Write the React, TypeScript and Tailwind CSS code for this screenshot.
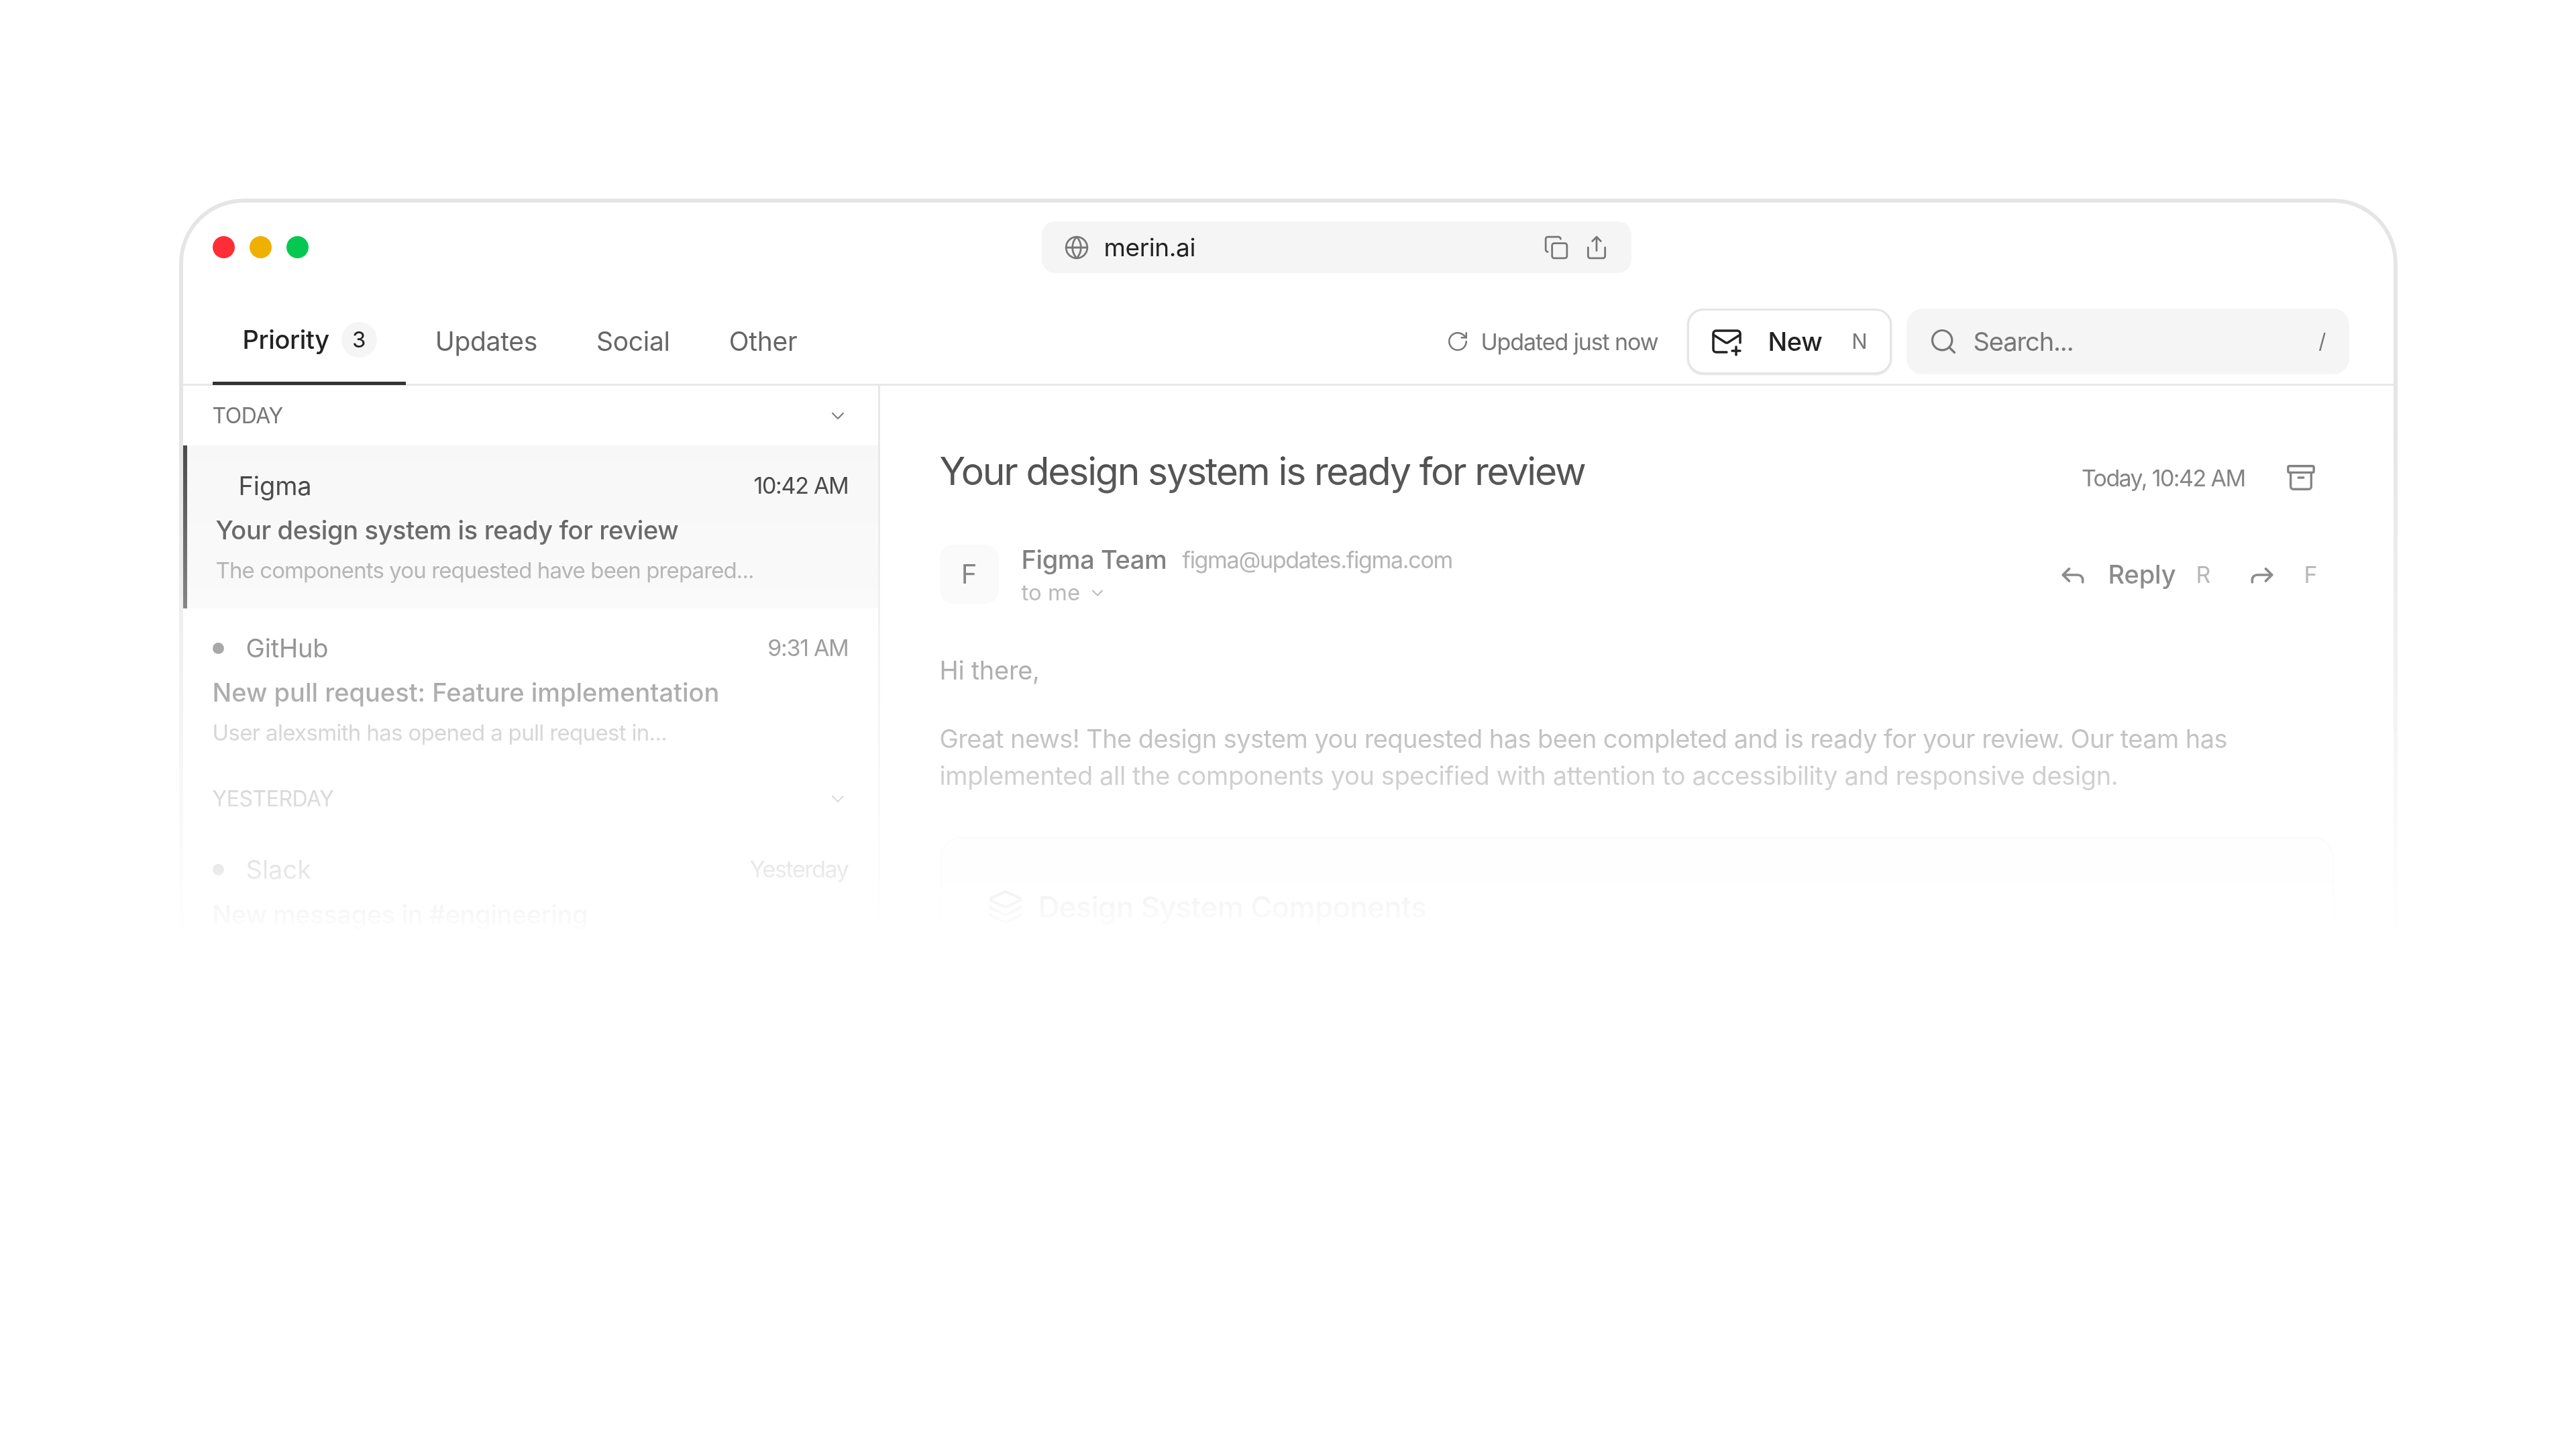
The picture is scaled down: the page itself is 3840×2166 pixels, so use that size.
import { Globe, Copy, Share, RotateCw, MailPlus, Search, ChevronDown, Archive, Reply, Forward, Layers } from "lucide-react";

function SectionHeader({ label }: { label: string }) {
  return (
    <div className="flex h-[89px] items-center justify-between pl-[44px] pr-[44px]">
      <span className="text-[32px] leading-[40px] tracking-[-0.5px] text-[#777777]">{label}</span>
      <ChevronDown className="h-[32px] w-[32px] text-[#777777]" strokeWidth={1.5} />
    </div>
  );
}

export default function App() {
  return (
    <div className="min-h-[2166px] bg-white pt-[296px] font-['Inter',sans-serif]">
      <div className="mx-auto flex h-[1200px] w-[3307px] flex-col overflow-hidden rounded-t-[96px] border-[6px] border-[#e5e5e5] [mask-image:linear-gradient(to_bottom,black_344px,transparent_1100px)]">
        {/* title bar */}
        <div className="flex h-[105px] items-end pl-[44px]">
          <div className="flex h-[77px] items-center gap-[22px]">
            <span className="h-[33px] w-[33px] rounded-full bg-[#ff2d38]" />
            <span className="h-[33px] w-[33px] rounded-full bg-[#f0b000]" />
            <span className="h-[33px] w-[33px] rounded-full bg-[#05c851]" />
          </div>
          <div className="ml-[1093px] flex h-[77px] w-[879px] items-center rounded-[20px] bg-[#f5f5f5] pl-[33px] pr-[33px]">
            <Globe className="h-[38px] w-[38px] text-[#777777]" strokeWidth={1.75} />
            <span className="ml-[22px] text-[37px] leading-none tracking-[-0.4px] text-[#222222]">merin.ai</span>
            <Copy className="ml-auto h-[38px] w-[38px] text-[#777777]" strokeWidth={1.75} />
            <Share className="ml-[22px] h-[38px] w-[38px] text-[#777777]" strokeWidth={1.75} />
          </div>
        </div>

        {/* tabs */}
        <div className="flex h-[168px] items-end border-b-[3px] border-[#e8e8e8] pl-[44px] pr-[66px]">
          <div className="-mb-[2px] flex items-center self-end">
            <div className="flex h-[126px] items-center gap-[18px] border-b-[5px] border-[#333333] pb-[4px] pl-[45px] pr-[43px]">
              <span className="text-[38px] font-medium tracking-[-0.4px] text-[#222222]">Priority</span>
              <span className="flex h-[53px] w-[53px] items-center justify-center rounded-full bg-[#f5f5f5] text-[33px] text-[#222222]">3</span>
            </div>
            <div className="flex h-[126px] items-center px-[44px] pb-[4px] text-[39px] tracking-[-0.3px] text-[#666666]">Updates</div>
            <div className="flex h-[126px] items-center px-[44px] pb-[4px] text-[39px] tracking-[-0.3px] text-[#666666]">Social</div>
            <div className="flex h-[126px] items-center px-[44px] pb-[4px] text-[39px] tracking-[-0.3px] text-[#666666]">Other</div>
          </div>
          <div className="ml-auto flex items-center pb-[14px]">
            <RotateCw className="h-[34px] w-[34px] text-[#777777]" strokeWidth={1.75} />
            <span className="ml-[17px] text-[34px] tracking-[-1.1px] text-[#777777]">Updated just now</span>
            <div className="ml-[43px] flex h-[98px] w-[305px] items-center rounded-[24px] border-[3px] border-[#e5e5e5] bg-white pl-[32px] pr-[33px] shadow-sm">
              <MailPlus className="h-[48px] w-[48px] text-[#222222]" strokeWidth={1.75} />
              <span className="ml-[38px] text-[38px] font-medium tracking-[-0.4px] text-[#222222]">New</span>
              <span className="ml-auto text-[31px] text-[#777777]">N</span>
            </div>
            <div className="ml-[22px] flex h-[98px] w-[660px] items-center rounded-[24px] bg-[#f5f5f5] pl-[33px] pr-[34px]">
              <Search className="h-[44px] w-[44px] text-[#777777]" strokeWidth={1.75} />
              <span className="ml-[23px] text-[38px] tracking-[-1.1px] text-[#777777]">Search...</span>
              <span className="ml-auto text-[31px] text-[#777777]">/</span>
            </div>
          </div>
        </div>

        {/* body */}
        <div className="flex min-h-0 flex-1">
          <div className="w-[1039px] shrink-0 border-r-[3px] border-[#e8e8e8]">
            <SectionHeader label="TODAY" />
            <div className="h-[243px] border-l-[6px] border-[#444444] bg-[#f7f7f7] pl-[43px] pr-[44px] pt-[38px]">
              <div className="flex h-[44px] items-center">
                <span className="ml-[34px] text-[38px] leading-[44px] tracking-[-0.1px] text-[#333333]">Figma</span>
                <span className="ml-auto text-[34px] leading-[44px] tracking-[-1.3px] text-[#333333]">10:42 AM</span>
              </div>
              <div className="mt-[22px] text-[38px] font-medium leading-[44px] tracking-[-0.35px] text-[#444444]">Your design system is ready for review</div>
              <div className="mt-[18px] text-[33px] leading-[40px] tracking-[-0.9px] text-[#999999]">The components you requested have been prepared...</div>
            </div>
            <div className="h-[239px] pl-[44px] pr-[44px] pt-[37px]">
              <div className="flex h-[44px] items-center">
                <span className="h-[17px] w-[17px] rounded-full bg-[#666666]" />
                <span className="ml-[33px] text-[38px] leading-[44px] tracking-[-0.2px] text-[#444444]">GitHub</span>
                <span className="ml-auto text-[34px] leading-[44px] tracking-[-1.3px] text-[#555555]">9:31 AM</span>
              </div>
              <div className="mt-[22px] text-[38px] font-medium leading-[44px] tracking-[0px] text-[#555555]">New pull request: Feature implementation</div>
              <div className="mt-[18px] text-[33px] leading-[40px] tracking-[-0.67px] text-[#999999]">User alexsmith has opened a pull request in...</div>
            </div>
            <SectionHeader label="YESTERDAY" />
            <div className="pl-[44px] pr-[44px] pt-[39px]">
              <div className="flex h-[44px] items-center">
                <span className="h-[17px] w-[17px] rounded-full bg-[#666666]" />
                <span className="ml-[33px] text-[38px] leading-[44px] tracking-[0px] text-[#444444]">Slack</span>
                <span className="ml-auto text-[34px] leading-[44px] tracking-[-1.4px] text-[#555555]">Yesterday</span>
              </div>
              <div className="mt-[23px] text-[38px] font-medium leading-[44px] tracking-[-0.4px] text-[#555555]">New messages in #engineering</div>
            </div>
          </div>

          <div className="min-w-0 flex-1 pl-[89px] pr-[88px] pt-[92px]">
            <div className="flex items-center justify-between">
              <h1 className="text-[57px] font-normal leading-[72px] tracking-[-2.15px] text-[#444444]">Your design system is ready for review</h1>
              <div className="mt-[18px] flex items-center gap-[60px] pr-[27px]">
                <span className="text-[34px] tracking-[-1.6px] text-[#777777]">Today, 10:42 AM</span>
                <Archive className="h-[46px] w-[46px] text-[#777777]" strokeWidth={1.75} />
              </div>
            </div>

            <div className="mt-[73px] flex items-center justify-between">
              <div className="flex items-start gap-[34px]">
                <div className="flex h-[88px] w-[88px] items-center justify-center rounded-[20px] bg-[#f8f8f8] text-[40px] text-[#555555]">F</div>
                <div>
                  <div className="flex h-[44px] items-center gap-[23px]">
                    <span className="text-[38px] font-medium tracking-[-0.4px] text-[#555555]">Figma Team</span>
                    <span className="text-[34px] tracking-[-1.3px] text-[#999999]">figma@updates.figma.com</span>
                  </div>
                  <div className="mt-[8px] flex h-[40px] items-center gap-[12px] text-[33px] text-[#999999]">
                    <span>to me</span>
                    <ChevronDown className="h-[28px] w-[28px]" strokeWidth={1.75} />
                  </div>
                </div>
              </div>
              <div className="-mt-[3px] flex items-center pr-[25px]">
                <Reply className="h-[44px] w-[44px] text-[#5c5c5c]" strokeWidth={2} />
                <span className="ml-[30px] text-[38px] font-medium tracking-[-0.1px] text-[#5c5c5c]">Reply</span>
                <span className="ml-[30px] text-[34px] text-[#999999]">R</span>
                <Forward className="ml-[55px] h-[44px] w-[44px] text-[#5c5c5c]" strokeWidth={2} />
                <span className="ml-[40px] text-[34px] text-[#999999]">F</span>
              </div>
            </div>

            <p className="mt-[68px] text-[38px] leading-[55px] tracking-[-0.3px] text-[#666666]">Hi there,</p>
            <p className="mt-[47px] text-[38px] leading-[55px] text-[#666666]">
              <span className="block tracking-[-0.58px]">Great news! The design system you requested has been completed and is ready for your review. Our team has</span>
              <span className="block tracking-[-0.38px]">implemented all the components you specified with attention to accessibility and responsive design.</span>
            </p>

            <div className="mt-[63px] h-[300px] rounded-[32px] border-[3px] border-[#eeeeee] bg-[#fafafa] pl-[68px] pt-[69px]">
              <div className="flex items-center gap-[22px]">
                <Layers className="h-[54px] w-[54px] text-[#777777]" strokeWidth={1.75} />
                <span className="text-[44px] font-medium tracking-[-0.7px] text-[#777777]">Design System Components</span>
              </div>
            </div>
          </div>
        </div>
      </div>
    </div>
  );
}
